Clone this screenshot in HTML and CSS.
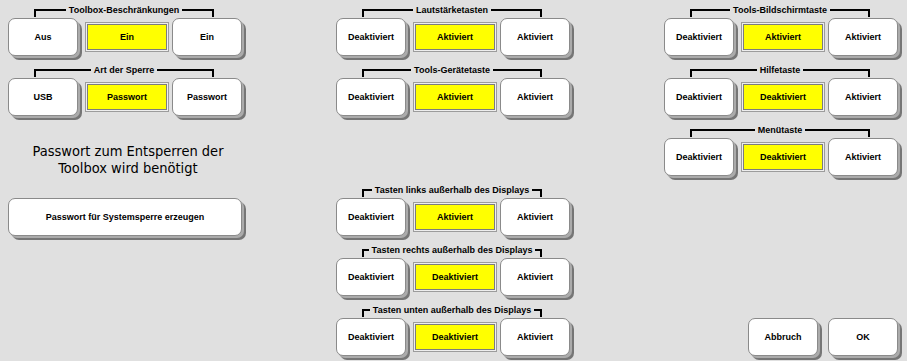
FILE: index.html
```html
<!DOCTYPE html>
<html>
<head>
    <title>Toolbox-Einstellungen</title>
    <meta charset="UTF-8">
    <link rel="stylesheet" href="styles.css">
</head>
<body>
    <div class="column">
        <div class="setting">
            <div class="bracket"><span>Toolbox-Beschränkungen</span></div>
            <div class="choice">
                <div class="btn">Aus</div>
                <div class="current">Ein</div>
                <div class="btn">Ein</div>
            </div>
        </div>
        <div class="setting">
            <div class="bracket"><span>Art der Sperre</span></div>
            <div class="choice">
                <div class="btn">USB</div>
                <div class="current">Passwort</div>
                <div class="btn">Passwort</div>
            </div>
        </div>
        <div class="note">Passwort zum Entsperren der<br>Toolbox wird benötigt</div>
        <div class="btn wide">Passwort für Systemsperre erzeugen</div>
    </div>

    <div class="column">
        <div class="setting">
            <div class="bracket"><span>Lautstärketasten</span></div>
            <div class="choice">
                <div class="btn">Deaktiviert</div>
                <div class="current">Aktiviert</div>
                <div class="btn">Aktiviert</div>
            </div>
        </div>
        <div class="setting">
            <div class="bracket"><span>Tools-Gerätetaste</span></div>
            <div class="choice">
                <div class="btn">Deaktiviert</div>
                <div class="current">Aktiviert</div>
                <div class="btn">Aktiviert</div>
            </div>
        </div>
        <div class="setting push">
            <div class="bracket"><span>Tasten links außerhalb des Displays</span></div>
            <div class="choice">
                <div class="btn">Deaktiviert</div>
                <div class="current">Aktiviert</div>
                <div class="btn">Aktiviert</div>
            </div>
        </div>
        <div class="setting">
            <div class="bracket"><span>Tasten rechts außerhalb des Displays</span></div>
            <div class="choice">
                <div class="btn">Deaktiviert</div>
                <div class="current">Deaktiviert</div>
                <div class="btn">Aktiviert</div>
            </div>
        </div>
        <div class="setting">
            <div class="bracket"><span>Tasten unten außerhalb des Displays</span></div>
            <div class="choice">
                <div class="btn">Deaktiviert</div>
                <div class="current">Deaktiviert</div>
                <div class="btn">Aktiviert</div>
            </div>
        </div>
    </div>

    <div class="column">
        <div class="setting">
            <div class="bracket"><span>Tools-Bildschirmtaste</span></div>
            <div class="choice">
                <div class="btn">Deaktiviert</div>
                <div class="current">Aktiviert</div>
                <div class="btn">Aktiviert</div>
            </div>
        </div>
        <div class="setting">
            <div class="bracket"><span>Hilfetaste</span></div>
            <div class="choice">
                <div class="btn">Deaktiviert</div>
                <div class="current">Deaktiviert</div>
                <div class="btn">Aktiviert</div>
            </div>
        </div>
        <div class="setting">
            <div class="bracket"><span>Menütaste</span></div>
            <div class="choice">
                <div class="btn">Deaktiviert</div>
                <div class="current">Deaktiviert</div>
                <div class="btn">Aktiviert</div>
            </div>
        </div>
        <div class="actions">
            <div class="btn">Abbruch</div>
            <div class="btn">OK</div>
        </div>
    </div>
</body>
</html>
```

FILE: styles.css
```css
body {
    margin: 0;
    padding-left: 8px;
    height: 361px;
    overflow: hidden;
    background-color: #E0E0E0;
    font-family: "Liberation Sans", Arial, sans-serif;
    color: #000000;
    display: flex;
    gap: 88px;
}

.column {
    width: 240px;
    display: flex;
    flex-direction: column;
}

.setting {
    height: 60px;
}

.push {
    margin-top: 60px;
}

/* Klammer mit Titel ueber den drei Knoepfen */
.bracket {
    box-sizing: border-box;
    width: 180px;
    height: 8px;
    margin: 9px 0 1px 26px;
    border: 2px solid #000000;
    border-bottom: none;
    display: flex;
    justify-content: center;
}

.bracket span {
    height: 12px;
    margin-top: -7px;
    padding: 0 3px;
    background-color: #E0E0E0;
    font-size: 9px;
    font-weight: bold;
    line-height: 12px;
    white-space: nowrap;
}

.choice {
    display: flex;
    align-items: center;
}

.btn {
    box-sizing: border-box;
    width: 70px;
    height: 38px;
    border: 1px solid #8A8A8A;
    border-radius: 7px;
    background-color: #FFFFFF;
    box-shadow: 2px 2px 0 #ABABAB, 4px 4px 0 #767676;
    display: flex;
    align-items: center;
    justify-content: center;
    font-size: 9px;
    font-weight: bold;
}

.current {
    box-sizing: border-box;
    width: 80px;
    height: 26px;
    margin: 0 5px 0 9px;
    background-color: #FFFF00;
    border: 1px solid #7C7C7C;
    box-shadow: 0 0 0 1px #EEEEEE, 0 0 0 2px #9C9C9C;
    display: flex;
    align-items: center;
    justify-content: center;
    font-size: 9px;
    font-weight: bold;
}

.note {
    margin-top: 23px;
    text-align: center;
    font-family: "DejaVu Sans Condensed", "DejaVu Sans", sans-serif;
    font-size: 14.5px;
    line-height: 17px;
}

.wide {
    width: 234px;
    margin-top: 21px;
}

.actions {
    margin-top: 138px;
    padding-right: 6px;
    display: flex;
    justify-content: flex-end;
    gap: 10px;
}
```
